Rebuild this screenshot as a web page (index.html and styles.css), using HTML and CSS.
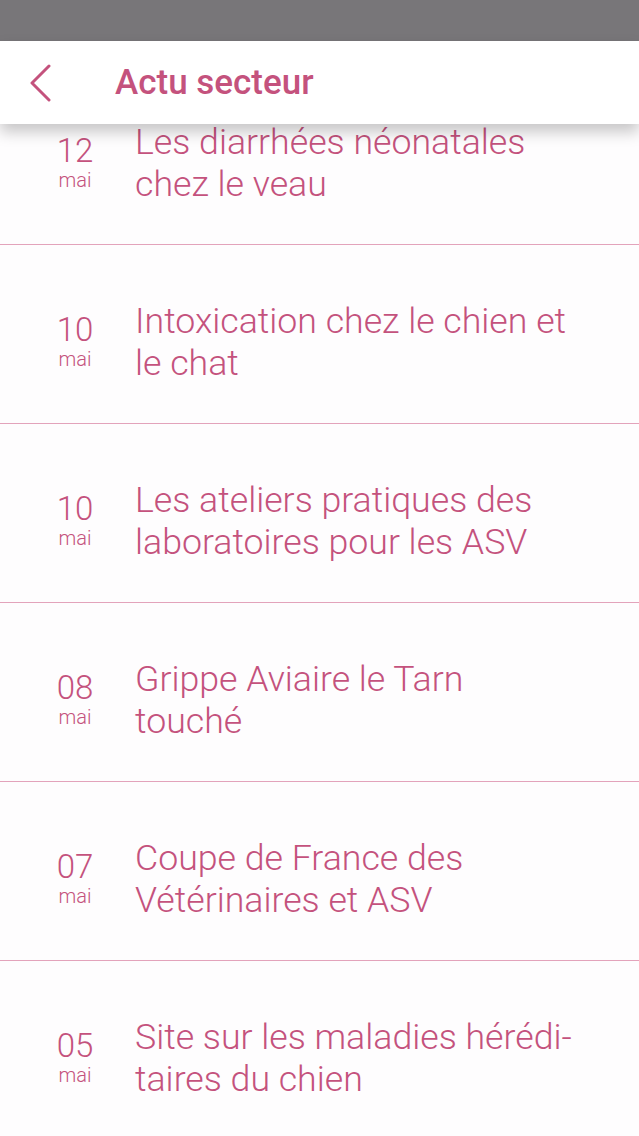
FILE: index.html
```html
<!DOCTYPE html>
<html lang="fr">

<head>
  <meta charset="UTF-8">
  <meta name="viewport" content="width=device-width, initial-scale=1.0">
  <title>Actu secteur</title>
  <link rel="stylesheet" href="styles.css">
</head>

<body>
  <div class="statusbar"></div>
  <div class="screen">
    <!-- Top bar, stays over the list -->
    <header class="topbar">
      <svg class="back" width="24" height="38" viewBox="0 0 24 38">
        <path d="M20 2 L3 19 L20 36" fill="none" stroke="currentColor" stroke-width="3" stroke-linecap="round" stroke-linejoin="round"/>
      </svg>
      <h1>Actu secteur</h1>
    </header>

    <ul class="news">
      <li class="item">
        <div class="date"><span class="day">12</span><span class="month">mai</span></div>
        <div class="title">Les diarrhées néonatales chez le veau</div>
      </li>
      <li class="item">
        <div class="date"><span class="day">10</span><span class="month">mai</span></div>
        <div class="title">Intoxication chez le chien et le chat</div>
      </li>
      <li class="item">
        <div class="date"><span class="day">10</span><span class="month">mai</span></div>
        <div class="title">Les ateliers pratiques des laboratoires pour les ASV</div>
      </li>
      <li class="item">
        <div class="date"><span class="day">08</span><span class="month">mai</span></div>
        <div class="title">Grippe Aviaire le Tarn touché</div>
      </li>
      <li class="item">
        <div class="date"><span class="day">07</span><span class="month">mai</span></div>
        <div class="title">Coupe de France des Vétérinaires et ASV</div>
      </li>
      <li class="item">
        <div class="date"><span class="day">05</span><span class="month">mai</span></div>
        <div class="title"><span class="line">Site sur les maladies hérédi-</span><br>taires du chien</div>
      </li>
    </ul>
  </div>
</body>

</html>
```

FILE: styles.css
```css
body {
  margin: 0;
  height: 1136px;
  overflow: hidden;
  background: #fefdfe;
  font-family: Roboto, "Noto Sans", sans-serif;
  color: #c4527d;
}

.statusbar {
  height: 41px;
  background: #787679;
}

.screen {
  position: relative;
  padding-top: 25px;
}

.topbar {
  position: absolute;
  top: 0;
  left: 0;
  right: 0;
  z-index: 2;
  height: 83px;
  display: flex;
  align-items: center;
  background: #fff;
  box-shadow: 0 8px 14px rgba(0, 0, 0, 0.22);
}

.back {
  margin-left: 29px;
  color: #c4527d;
}

.topbar h1 {
  margin: 0 0 0 62px;
  font-size: 35px;
  font-weight: 500;
  color: #c4527d;
}

.news {
  list-style: none;
  margin: 0;
  padding: 0;
}

.item {
  box-sizing: border-box;
  height: 179px;
  display: flex;
  align-items: center;
  padding-top: 8px;
  border-bottom: 1px solid #e3a3bb;
}

.date {
  width: 110px;
  margin-left: 20px;
  margin-right: 5px;
  padding-top: 8px;
  display: flex;
  flex-direction: column;
  align-items: center;
  font-weight: 300;
}

.day {
  font-size: 33px;
  line-height: 34px;
}

.month {
  font-size: 20px;
  line-height: 24px;
}

.title {
  flex: 1;
  padding-top: 8px;
  padding-right: 64px;
  font-size: 35.7px;
  font-weight: 300;
  line-height: 42px;
}

.title .line {
  white-space: nowrap;
}
```
